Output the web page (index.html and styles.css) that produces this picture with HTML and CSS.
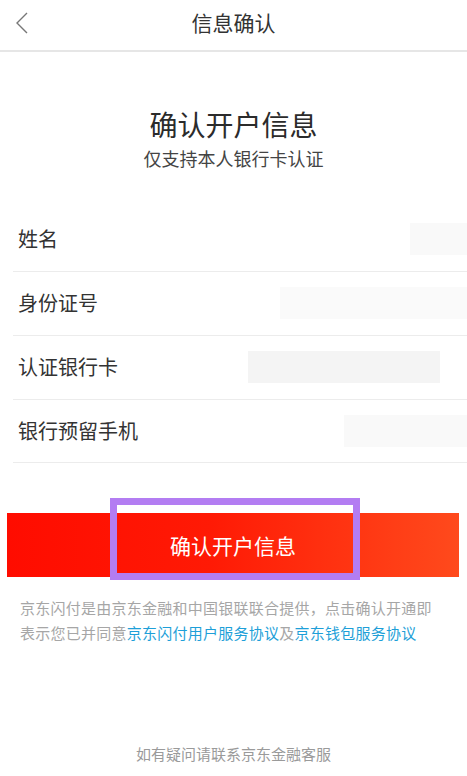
FILE: index.html
```
<!DOCTYPE html>
<html lang="zh-CN">
<head>
<meta charset="utf-8">
<title>信息确认</title>
<link rel="stylesheet" href="styles.css">
</head>
<body>
<div class="page">
  <header class="nav">
    <span class="back">
      <svg width="14" height="22" viewBox="0 0 14 22"><path d="M12 1 L2 11 L12 21" fill="none" stroke="#777" stroke-width="1.4"/></svg>
    </span>
    <h1 class="nav-title">信息确认</h1>
  </header>

  <section class="intro">
    <h2 class="intro-title">确认开户信息</h2>
    <p class="intro-sub">仅支持本人银行卡认证</p>
  </section>

  <ul class="form">
    <li class="row"><span class="label">姓名</span><span class="mask mask-1"></span></li>
    <li class="row"><span class="label">身份证号</span><span class="mask mask-2"></span></li>
    <li class="row"><span class="label">认证银行卡</span><span class="mask mask-3"></span></li>
    <li class="row"><span class="label">银行预留手机</span><span class="mask mask-4"></span></li>
  </ul>

  <div class="btn-wrap">
    <button class="btn">确认开户信息</button>
    <span class="highlight"></span>
  </div>

  <div class="agree">
    <p class="agree-line">京东闪付是由京东金融和中国银联联合提供，点击确认开通即</p>
    <p class="agree-line"><span class="plain">表示您已并同意</span><span class="link">京东闪付用户服务协议</span><span class="plain">及</span><span class="link">京东钱包服务协议</span></p>
  </div>

  <p class="help">如有疑问请联系京东金融客服</p>
</div>
</body>
</html>
```

FILE: styles.css
```
* { box-sizing: border-box; }
html, body { margin: 0; padding: 0; background: #fff; }
body { font-family: "Noto Sans CJK SC", "Noto Sans", sans-serif; color: #333; }
.page { width: 467px; height: 776px; overflow: hidden; display: flex; flex-direction: column; }

.nav { position: relative; height: 52px; border-bottom: 2px solid #e6e6e6; padding-bottom: 6px; display: flex; justify-content: center; align-items: center; }
.back { position: absolute; left: 15px; top: 12px; width: 14px; height: 22px; display: flex; }
.nav-title { margin: 0; font-size: 21px; font-weight: 400; line-height: 44px; color: #333; }

.intro { margin-top: 54px; text-align: center; }
.intro-title { margin: 0; font-size: 28px; font-weight: 400; line-height: 36px; color: #2b2b2b; }
.intro-sub { margin: 4px 0 0; font-size: 18px; line-height: 24px; color: #444; }

.form { list-style: none; margin: 38px 0 0; padding: 0; }
.row { height: 64px; margin-left: 13px; border-bottom: 1px solid #ececec; display: flex; align-items: center; padding-left: 5px; padding-bottom: 1px; }
.row:last-child { height: 63px; }
.label { font-size: 20px; line-height: 28px; color: #333; flex: none; }
.mask { margin-left: auto; height: 32px; background: #f9f9f9; }
.mask-1 { width: 57px; }
.mask-2 { width: 187px; background: #fafafa; }
.mask-3 { width: 192px; background: #f4f4f4; margin-right: 27px; }
.mask-4 { width: 123px; background: #f9f9f9; }

.btn-wrap { position: relative; margin: 50px 8px 0 7px; }
.btn { display: block; width: 100%; height: 64px; border: 0; padding: 0; background: linear-gradient(90deg, #ff0c00 0%, #ff1a05 45%, #ff4a1c 100%); color: #fff; font-family: inherit; font-size: 21px; line-height: 64px; }
.highlight { position: absolute; left: 103px; top: -15px; width: 250px; height: 82px; border: 7px solid #b37df2; }

.agree { margin-top: 18px; padding: 0 20px; display: flex; flex-direction: column; }
.agree-line { margin: 0; font-size: 15px; line-height: 25px; letter-spacing: 0.25px; color: #a6a6a6; white-space: nowrap; }
.link { color: #1e9fd8; }

.help { margin: 98px 0 0; text-align: center; font-size: 15px; line-height: 22px; color: #9a9a9a; }
```
